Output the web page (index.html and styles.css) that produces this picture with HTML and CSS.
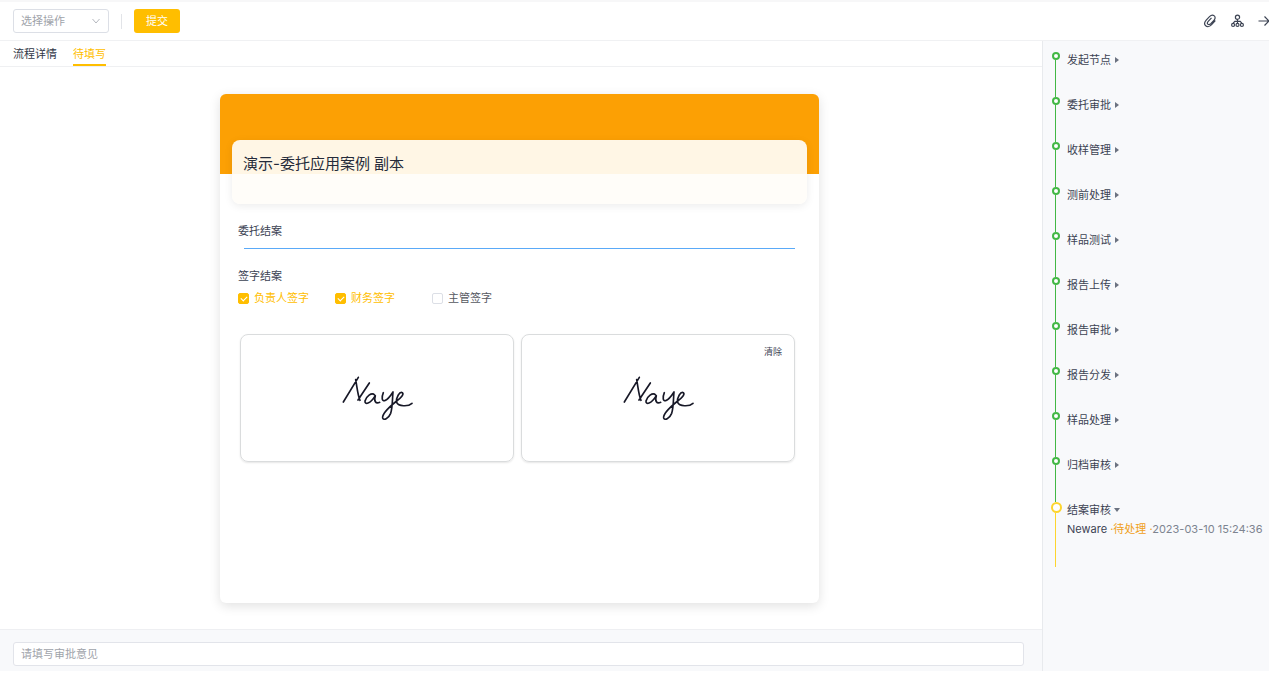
FILE: index.html
```html
<!DOCTYPE html>
<html lang="zh-CN">
<head>
<meta charset="utf-8">
<title>演示-委托应用案例 副本</title>
<link rel="stylesheet" href="styles.css">
</head>
<body>
<svg class="defs" aria-hidden="true">
  <symbol id="naye" viewBox="336 166 219 138">
    <path d="M343 247L388 173M380 180C384 200 386 226 393 242M387 241L421 190M437 226C428 216 411 231 408 244C407 256 423 254 439 228C434 244 440 254 452 248M463 219C457 234 459 245 467 243C477 240 485 228 492 217C490 235 491 262 485 281C478 298 464 303 461 295C458 280 486 258 503 244C516 235 526 224 520 219C512 215 500 234 503 248C508 260 537 262 549 251"/>
  </symbol>
</svg>
<header class="toolbar">
  <div class="action">
    <select class="action-select" aria-label="选择操作"><option>选择操作</option></select>
    <svg class="chevron" viewBox="0 0 8 8" aria-hidden="true"><path d="M.5 2L4 6L7.500 2"/></svg>
  </div>
  <span class="divider"></span>
  <button class="submit" type="button">提交</button>
  <nav class="tools">
    <button class="tool" type="button" aria-label="附件"><svg viewBox="0 0 14 14"><path d="M12.300 6.500L8.600 10.700C6.800 12.700 4.200 13.100 2.700 11.800C1.200 10.400 1.500 8 3.200 6.100L6.500 2.700C7.900 1.200 10 .8 11.300 1.900C12.600 3.100 12.200 5 10.900 6.400L7.800 9.700C6.800 10.700 5.500 10.900 4.800 10.200C4.100 9.500 4.400 8.300 5.200 7.400L8.500 3.900"/></svg></button>
    <button class="tool" type="button" aria-label="流程图"><svg viewBox="0 0 14 14"><circle cx="7.500" cy="3.200" r="2.100"/><path d="M7.500 5.300V9M3.200 9.200L4.800 7.400H10.200L11.800 9.200"/><circle cx="3.100" cy="10.900" r="1.500"/><circle cx="7.500" cy="10.900" r="1.500"/><circle cx="11.900" cy="10.900" r="1.500"/></svg></button>
    <button class="tool" type="button" aria-label="收起"><svg viewBox="0 0 14 14"><path d="M1.500 7H12M7.500 2.500L12 7L7.500 11.500"/></svg></button>
  </nav>
</header>
<div class="workspace">
  <div class="content">
    <nav class="tabs">
      <a class="tab" href="#detail">流程详情</a>
      <a class="tab tab-active" href="#fill" aria-current="page">待填写</a>
    </nav>
    <main class="stage">
      <form class="card">
        <h1 class="card-title">演示-委托应用案例 副本</h1>
        <div class="fields">
          <label class="label" for="closing">委托结案</label>
          <input class="line-input" id="closing" type="text">
          <fieldset class="signers">
            <legend class="label">签字结案</legend>
            <div class="options">
              <label class="option"><input type="checkbox" checked><span>负责人签字</span></label>
              <label class="option"><input type="checkbox" checked><span>财务签字</span></label>
              <label class="option"><input type="checkbox"><span>主管签字</span></label>
            </div>
          </fieldset>
          <div class="pads">
            <div class="pad"><svg class="signature" role="img" aria-label="Naye"><use href="#naye"/></svg></div>
            <div class="pad"><svg class="signature" role="img" aria-label="Naye"><use href="#naye"/></svg><button class="clear" type="button">清除</button></div>
          </div>
        </div>
      </form>
    </main>
    <footer class="opinion">
      <input class="opinion-input" type="text" placeholder="请填写审批意见" aria-label="请填写审批意见">
    </footer>
  </div>
  <aside class="sidebar">
    <ol class="timeline">
      <li class="step"><button class="step-name" type="button">发起节点</button></li>
      <li class="step"><button class="step-name" type="button">委托审批</button></li>
      <li class="step"><button class="step-name" type="button">收样管理</button></li>
      <li class="step"><button class="step-name" type="button">测前处理</button></li>
      <li class="step"><button class="step-name" type="button">样品测试</button></li>
      <li class="step"><button class="step-name" type="button">报告上传</button></li>
      <li class="step"><button class="step-name" type="button">报告审批</button></li>
      <li class="step"><button class="step-name" type="button">报告分发</button></li>
      <li class="step"><button class="step-name" type="button">样品处理</button></li>
      <li class="step"><button class="step-name" type="button">归档审核</button></li>
      <li class="step step-current">
        <button class="step-name" type="button">结案审核</button>
        <p class="record">Neware <span class="pending">·待处理 ·</span><time>2023-03-10 15:24:36</time></p>
      </li>
    </ol>
  </aside>
</div>
</body>
</html>
```
FILE: styles.css
```css
*, *::before, *::after { box-sizing: border-box; }

body {
  margin: 0;
  min-height: 100vh;
  display: flex;
  flex-direction: column;
  padding-bottom: 2px;
  background: #fff;
  color: #3c4353;
  font: 11px/15px Inter, "Noto Sans CJK SC", sans-serif;
}

button, input, select { font: inherit; color: inherit; }
button { border: 0; padding: 0; background: none; cursor: pointer; }

.defs { display: none; }

/* Toolbar */
.toolbar {
  display: flex;
  align-items: center;
  height: 41px;
  padding-left: 13px;
  border-top: 2px solid #f7f7f8;
  border-bottom: 1px solid #f0f1f3;
  overflow: hidden;
}
.action { display: grid; align-items: center; width: 96px; }
.action-select {
  grid-area: 1 / 1;
  appearance: none;
  width: 100%;
  height: 24px;
  padding: 0 7px;
  border: 1px solid #dcdfe6;
  border-radius: 3px;
  background: #fff;
  color: #a0a3aa;
}
.chevron {
  grid-area: 1 / 1;
  justify-self: end;
  width: 8px;
  height: 8px;
  margin-right: 9px;
  pointer-events: none;
  fill: none;
  stroke: #b4b7be;
}
.divider { width: 1px; height: 15px; margin: 0 12px; background: #e2e4e8; }
.submit {
  height: 24px;
  padding: 0 12px;
  border-radius: 3px;
  background: #ffbe00;
  color: #fff;
}
.tools { display: flex; gap: 13px; margin: 0 -2px 0 auto; }
.tool { display: flex; }
.tool svg { width: 14px; height: 14px; fill: none; stroke: #3c4353; stroke-width: 1.2; }

/* Work area */
.workspace { flex: 1; display: flex; }
.content { flex: 1; display: flex; flex-direction: column; min-width: 0; }

.tabs {
  display: flex;
  gap: 16px;
  height: 26px;
  padding-left: 13px;
  border-bottom: 1px solid #eff0f2;
}
.tab {
  padding: 6px 0 2px;
  border-bottom: 2px solid transparent;
  color: #2f3646;
  text-decoration: none;
}
.tab-active { border-color: #ffbe00; color: #ffbe00; }

.stage { flex: 1; display: flex; justify-content: center; padding: 27px 3px 26px 0; }
.card {
  flex: 0 1 599px;
  padding: 46px 12px 0;
  border-radius: 6px;
  background: #fff linear-gradient(#fca004, #fca004) 0 0 / 100% 80px no-repeat;
  box-shadow: 0 3px 12px rgba(0, 0, 0, .12);
}
.card-title {
  height: 64px;
  margin: 0;
  padding: 12px 11px;
  border-radius: 8px;
  background: rgba(255, 253, 249, .92);
  box-shadow: 0 2px 8px rgba(0, 0, 0, .08);
  color: #252b3a;
  font-size: 15px;
  font-weight: 400;
  line-height: 24px;
}
.fields { padding: 20px 12px 0 6px; }
.label { display: block; padding: 0; line-height: 15px; }
.line-input {
  display: block;
  width: calc(100% - 6px);
  height: 10px;
  margin: 0 0 20px 6px;
  padding: 0;
  border: 0;
  border-bottom: 1px solid #5aaaf8;
  outline: 0;
  background: none;
}
.signers { margin: 0; padding: 0; border: 0; }
.options { display: flex; padding-top: 7px; }
.option { display: flex; align-items: center; gap: 5px; width: 97px; color: #55585f; }
.option input {
  appearance: none;
  display: grid;
  place-items: center;
  width: 11px;
  height: 11px;
  margin: 0;
  border: 1px solid #dcdfe6;
  border-radius: 2px;
  background: #fff;
}
.option input:checked { border-color: #ffbe00; background: #ffbe00; }
.option input:checked::after {
  content: "";
  width: 6px;
  height: 4px;
  margin-bottom: 2px;
  border: solid #fff;
  border-width: 0 0 1px 1px;
  transform: rotate(-45deg);
}
.option input:checked + span { color: #ffbe00; }

.pads { display: flex; gap: 7px; padding: 28px 0 0 2px; }
.pad {
  position: relative;
  flex: 1;
  display: grid;
  place-items: center;
  height: 128px;
  border: 1px solid #dadcdd;
  border-radius: 8px;
  box-shadow: 0 1px 2px rgba(0, 0, 0, .1);
}
.signature {
  width: 73px;
  height: 46px;
  fill: none;
  stroke: #171827;
  stroke-width: 5;
  stroke-linecap: round;
  stroke-linejoin: round;
}
.clear { position: absolute; top: 9px; right: 12px; font-size: 9px; line-height: 15px; }

.opinion {
  padding: 12px 18px 5px 13px;
  border-top: 1px solid #eeeff2;
  background: #f8f9fb;
}
.opinion-input {
  display: block;
  width: 100%;
  height: 24px;
  padding: 0 7px;
  border: 1px solid #e2e4ea;
  border-radius: 3px;
  background: #fff;
}
.opinion-input::placeholder { color: #a0a3aa; }

/* Approval timeline */
.sidebar {
  flex: 0 0 227px;
  padding: 11px 0 0 7px;
  border-left: 1px solid #e8eaed;
  background: #f8f9fb;
}
.timeline { margin: 0; padding: 0; list-style: none; }
.step {
  display: grid;
  grid-template: 8px 1fr / 12px 1fr;
  column-gap: 5px;
  height: 45px;
}
.step::before {
  content: "";
  justify-self: center;
  width: 8px;
  height: 8px;
  border: 2px solid #42b845;
  border-radius: 50%;
  background: #fff;
}
.step::after {
  content: "";
  grid-area: 2 / 1;
  width: 1px;
  margin-left: 5px;
  background: #42b845;
}
.step-name {
  grid-area: 1 / 2 / 3 / 3;
  display: flex;
  align-items: center;
  gap: 4px;
  height: 16px;
}
.step-name::after {
  content: "";
  border: solid transparent;
  border-width: 3px 0 3px 4px;
  border-left-color: #6b7280;
}
.step-current { grid-template-rows: 11px 1fr; height: 65px; }
.step-current::before { width: 11px; height: 11px; border-color: #fdd52f; }
.step-current::after { background: #fdd52f; }
.step-current .step-name { gap: 3px; }
.step-current .step-name::after {
  border-width: 4px 3px 0;
  border-color: #6b7280 transparent transparent;
}
.record { grid-area: 2 / 2; margin: 9px 0 0; white-space: nowrap; }
.record .pending { color: #f0a020; }
.record time { color: #7d8490; }
```
